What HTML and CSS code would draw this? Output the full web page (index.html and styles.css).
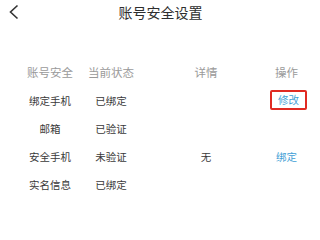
FILE: index.html
```html
<!DOCTYPE html>
<html lang="zh">
<head>
<meta charset="utf-8">
<link rel="stylesheet" href="styles.css">
</head>
<body>
<div class="bar">
  <svg class="back" width="12" height="16" viewBox="0 0 12 16"><path d="M9.5 1.5 L2.5 8 L9.5 14.5" fill="none" stroke="#333" stroke-width="1.6"/></svg>
  <div class="title">账号安全设置</div>
</div>
<div class="table">
  <div class="row head">
    <span>账号安全</span><span>当前状态</span><span>详情</span><span>操作</span>
  </div>
  <div class="row">
    <span>绑定手机</span><span>已绑定</span><span></span><span><a class="op boxed">修改</a></span>
  </div>
  <div class="row">
    <span>邮箱</span><span>已验证</span><span></span><span></span>
  </div>
  <div class="row">
    <span>安全手机</span><span>未验证</span><span>无</span><span><a class="op">绑定</a></span>
  </div>
  <div class="row">
    <span>实名信息</span><span>已绑定</span><span></span><span></span>
  </div>
</div>
</body>
</html>
```
FILE: styles.css
```css
html, body {
  margin: 0;
  padding: 0;
  background: #fff;
  width: 320px;
  height: 240px;
  overflow: hidden;
  font-family: "Noto Sans CJK SC", "Noto Sans", sans-serif;
}
.bar {
  position: relative;
  height: 24px;
  display: flex;
  align-items: center;
  justify-content: center;
}
.back {
  position: absolute;
  left: 8px;
  top: 4px;
}
.title {
  font-size: 14px;
  color: #2e2e2e;
  line-height: 24px;
  margin-left: 1px;
}
.table {
  margin-top: 34px;
  padding-left: 20px;
}
.row {
  display: grid;
  grid-template-columns: 60px 62px 128px 33px;
  height: 28px;
  align-items: center;
  font-size: 10.5px;
  color: #3a3a3a;
}
.row span {
  text-align: center;
  white-space: nowrap;
}
.row.head {
  font-size: 11.5px;
  color: #9a9a9a;
}
.op {
  color: #3f9fd6;
  display: inline-block;
  line-height: 14px;
}
.op.boxed {
  border: 2px solid #e02a22;
  border-radius: 2px;
  padding: 1px 6px;
}
```
